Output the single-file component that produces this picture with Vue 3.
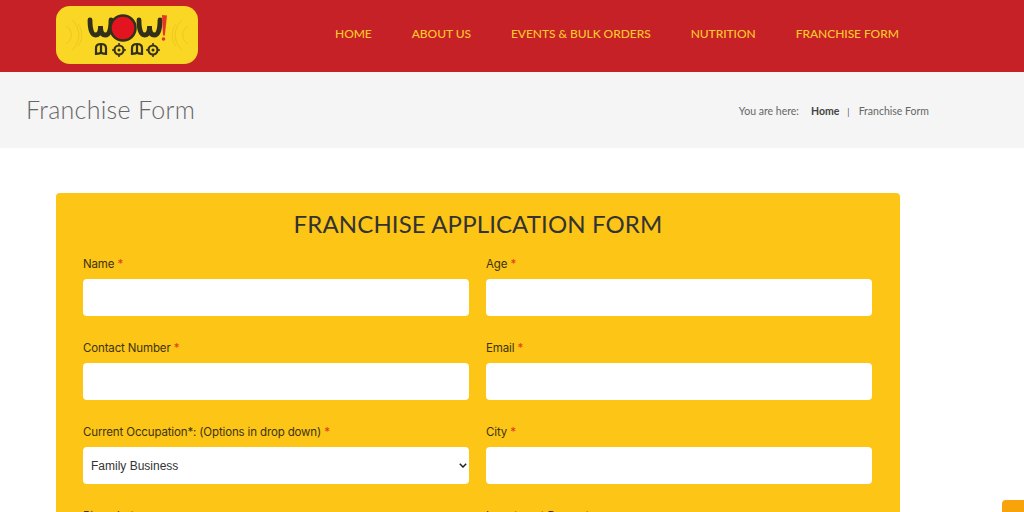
<script setup>
const nav = ['HOME', 'ABOUT US', 'EVENTS & BULK ORDERS', 'NUTRITION', 'FRANCHISE FORM']
const fields = [
  { label: 'Name' },
  { label: 'Age' },
  { label: 'Contact Number' },
  { label: 'Email' },
  { label: 'Current Occupation*: (Options in drop down)', select: true },
  { label: 'City' },
  { label: 'Pincode' },
  { label: 'Investment Range' },
]
</script>

<template>
  <div class="page">
    <header class="top">
      <div class="logo">
        <svg width="142" height="58" viewBox="0 0 142 58">
          <rect width="142" height="58" rx="14" fill="#fad625" />
          <g fill="none" stroke="#f0c81f" stroke-width="1">
            <path d="M10 20c7 4 7 14 0 18M16 14c9 8 9 22 0 30M22 18c5 6 5 16 0 22M132 20c-7 4-7 14 0 18M126 14c-9 8-9 22 0 30M120 18c-5 6-5 16 0 22" />
          </g>
          <g fill="none" stroke="#33301a" stroke-width="4.800" stroke-linecap="round">
            <path d="M34 14C34 24 36 29 39.500 29C43 29 44.500 26 44.500 20C44.500 26 46 29 49.500 29C53 29 55 24 55 14" />
            <path d="M83 14C83 24 85 29 88.500 29C92 29 93.500 26 93.500 20C93.500 26 95 29 98.500 29C102 29 104 24 104 14" />
          </g>
          <circle cx="67" cy="22" r="12.500" fill="#e3141f" stroke="#33301a" stroke-width="2.500" />
          <path d="M106 9l5 .500-2.200 20-1.800 0z" fill="#e5342a" />
          <circle cx="107.500" cy="33" r="1.800" fill="#e5342a" />
          <g fill="none" stroke="#33301a" stroke-width="2.200">
            <path d="M40 49v-7c0-3 2-4 5-4s5 1 5 4v7M45 38v8c-1 2-3 2-5 1M45 46c1 2 3 2 5 1" />
            <circle cx="63" cy="44" r="4.500" />
            <path d="M76 49v-7c0-3 2-4 5-4s5 1 5 4v7M81 38v8c-1 2-3 2-5 1M81 46c1 2 3 2 5 1" />
            <circle cx="97" cy="44" r="4.500" />
          </g>
          <circle cx="63" cy="44" r="1.500" fill="#33301a" />
          <circle cx="97" cy="44" r="1.500" fill="#33301a" />
          <path d="M63 37v2M63 49v2M56 44h2M68 44h2M97 37v2M97 49v2M90 44h2M102 44h2" stroke="#33301a" stroke-width="1.500" />
        </svg>
      </div>
      <nav class="nav">
        <a v-for="item in nav" :key="item" class="nav-link">{{ item }}</a>
      </nav>
    </header>

    <section class="crumbs">
      <h1 class="page-title">Franchise Form</h1>
      <div class="trail">
        <span>You are here:</span>
        <strong>Home</strong>
        <i class="sep">|</i>
        <span>Franchise Form</span>
      </div>
    </section>

    <main class="content">
      <form class="card">
        <h2 class="card-title">FRANCHISE APPLICATION FORM</h2>
        <div class="grid">
          <div v-for="field in fields" :key="field.label" class="field">
            <label class="label">{{ field.label }} <em>*</em></label>
            <div v-if="field.select" class="select-wrap">
              <select class="control select">
                <option>Family Business</option>
              </select>
              <svg class="chevron" width="8" height="5" viewBox="0 0 8 5">
                <path d="M.8 .8L4 4l3.200-3.200" fill="none" stroke="#222" stroke-width="1.500" />
              </svg>
            </div>
            <input v-else class="control" type="text" />
          </div>
        </div>
      </form>
    </main>

    <div class="corner"></div>
  </div>
</template>

<style>
html, body { margin: 0; overflow: hidden; background: #fff; }
</style>

<style scoped>
.page {
  position: relative;
  width: 1024px;
  height: 512px;
  overflow: hidden;
  font-family: Lato, sans-serif;
}
.top {
  height: 72px;
  background: #c62127;
  display: flex;
  padding: 6px 0 0 56px;
  box-sizing: border-box;
}
.logo { width: 142px; height: 58px; }
.logo svg { display: block; }
.nav {
  display: flex;
  gap: 40px;
  margin-left: 137px;
  height: 55px;
  align-items: center;
}
.nav-link {
  color: #fcc82a;
  font-size: 12px;
  font-weight: 500;
  letter-spacing: -0.05px;
  white-space: nowrap;
}
.crumbs {
  height: 76px;
  background: #f5f5f5;
  display: flex;
  align-items: center;
  padding: 0 95px 2px 26px;
  box-sizing: border-box;
}
.page-title {
  margin: 0;
  flex: 1;
  font-size: 25px;
  font-weight: 300;
  color: #666;
  letter-spacing: 0.3px;
}
.trail {
  display: flex;
  align-items: center;
  margin-top: 3px;
  font-size: 10.5px;
  color: #666;
}
.trail strong { margin-left: 12px; color: #444; font-weight: 700; }
.sep { margin: 2px 9px 0 8px; font-style: normal; font-size: 9px; color: #555; }
.content { padding: 45px 0 0 56px; }
.card {
  width: 844px;
  height: 400px;
  box-sizing: border-box;
  background: #fdc516;
  border-radius: 4px;
  padding: 16px 27px 0;
}
.card-title {
  margin: 0 0 18px;
  text-align: center;
  font-size: 24px;
  line-height: 29px;
  font-weight: 400;
  letter-spacing: 0.12px;
  color: #333;
}
.grid {
  display: grid;
  grid-template-columns: 386px 386px;
  column-gap: 17px;
  row-gap: 24px;
}
.label {
  display: block;
  font-family: Inter, sans-serif;
  font-size: 11.5px;
  letter-spacing: -0.14px;
  line-height: 17px;
  color: #3c3410;
  margin-bottom: 6px;
}
.label em { font-style: normal; color: #e2391c; }
.control {
  display: block;
  width: 100%;
  height: 37px;
  box-sizing: border-box;
  border: 0;
  border-radius: 4px;
  background: #fff;
  padding: 0 8px;
  margin: 0;
}
.select-wrap { position: relative; }
.select {
  appearance: none;
  font-family: "Liberation Sans", sans-serif;
  font-size: 12px;
  color: #333;
}
.chevron {
  position: absolute;
  right: 2px;
  top: 16px;
  pointer-events: none;
}
.corner {
  position: absolute;
  left: 1002px;
  top: 500px;
  width: 30px;
  height: 20px;
  border-radius: 4px;
  background: #f9a30b;
}
</style>
